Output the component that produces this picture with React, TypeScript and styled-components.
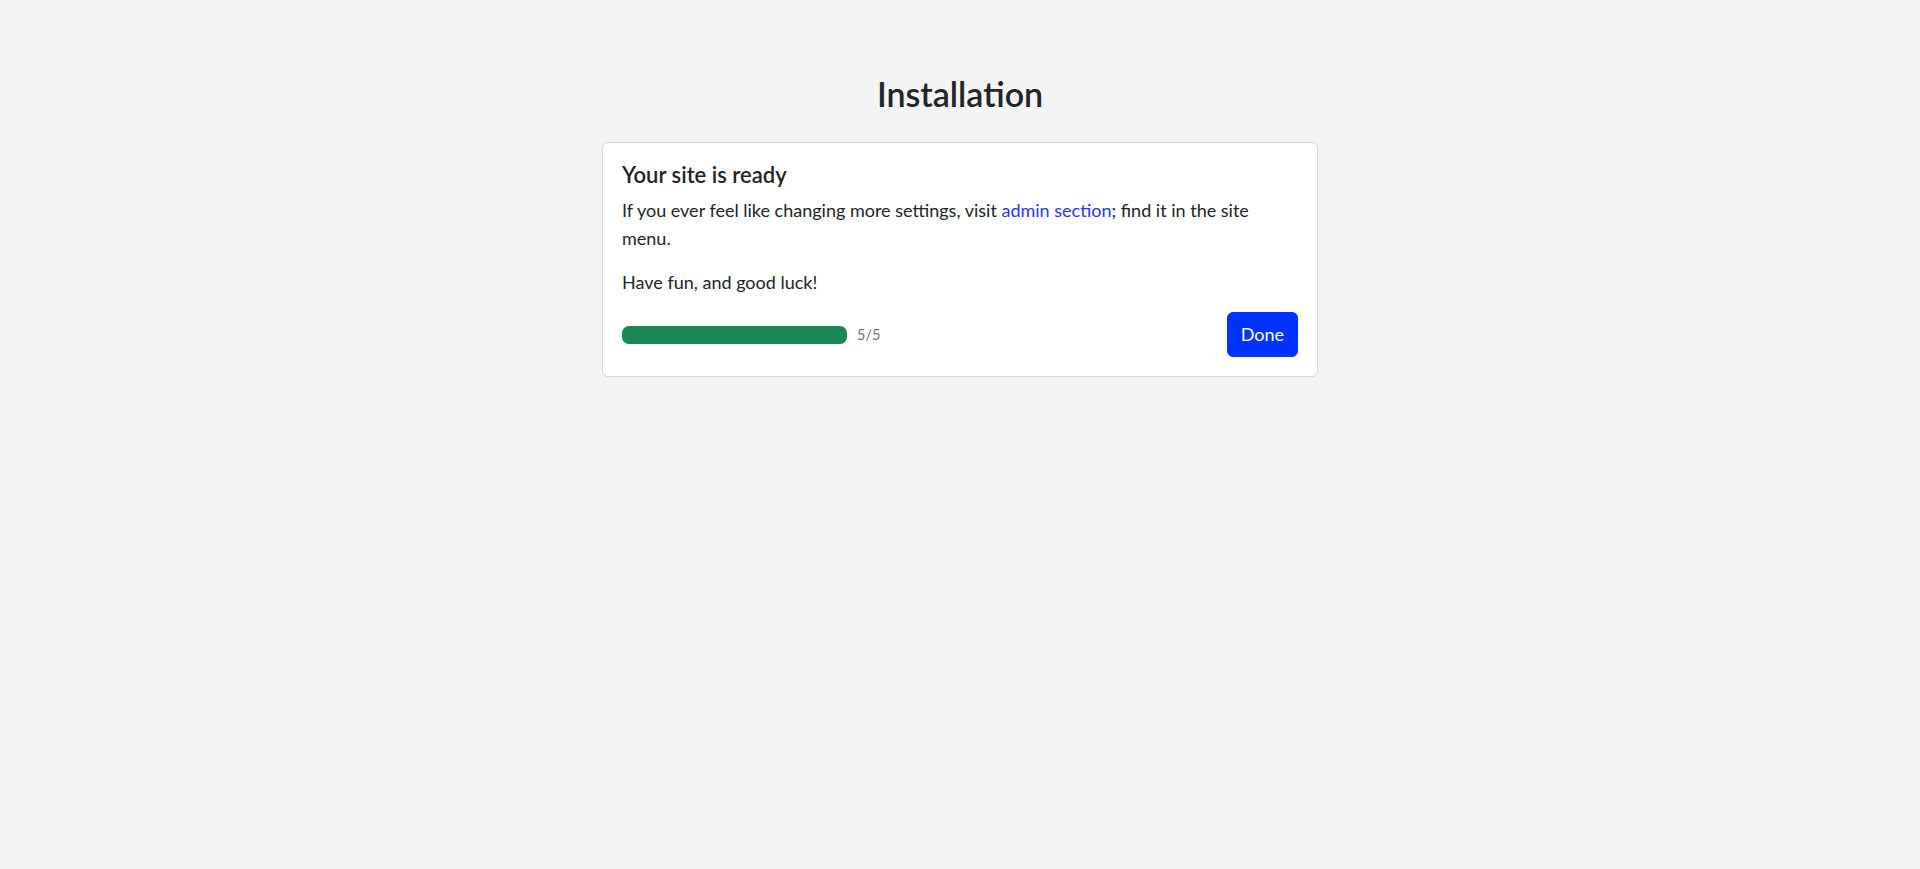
import styled, { createGlobalStyle } from "styled-components";

const GlobalStyle = createGlobalStyle`
  html, body {
    margin: 0;
    padding: 0;
    background-color: #f4f4f4;
    color: #212529;
    font-family: Lato, "Noto Sans", "Liberation Sans", sans-serif;
  }
`;

const Page = styled.main`
  min-height: 869px;
  display: flex;
  flex-direction: column;
  align-items: center;
  padding-top: 74px;
  box-sizing: border-box;
`;

const Heading = styled.h1`
  margin: 0 0 28px;
  font-size: 34px;
  font-weight: 600;
  line-height: 40px;
`;

const Card = styled.section`
  width: 716px;
  box-sizing: border-box;
  background-color: #fff;
  border: 1px solid #d4d4d4;
  border-radius: 6px;
  padding: 19px;
`;

const CardTitle = styled.h2`
  margin: 0 0 9px;
  font-size: 22px;
  font-weight: 600;
  line-height: 25px;
`;

const Text = styled.p`
  margin: 0 0 16px;
  font-size: 18px;
  line-height: 28px;
`;

const Link = styled.a`
  color: #1f35ff;
  text-decoration: none;
`;

const Footer = styled.div`
  display: flex;
  align-items: center;
  justify-content: space-between;
`;

const ProgressWrap = styled.div`
  display: flex;
  align-items: center;
  gap: 10px;
`;

const Track = styled.div`
  width: 225px;
  height: 18px;
  border-radius: 7px;
  background-color: #e9ecef;
  overflow: hidden;
`;

const Bar = styled.div`
  height: 100%;
  background-color: #198754;
`;

const Count = styled.span`
  font-size: 14.5px;
  color: #6c757d;
`;

const Button = styled.button`
  font-family: inherit;
  font-size: 18px;
  line-height: 27px;
  padding: 8px 13px;
  border: 1px solid #0033ff;
  border-radius: 6px;
  background-color: #0033ff;
  color: #fff;
  cursor: pointer;
`;

function App() {
  const done = 5;
  const total = 5;
  return (
    <>
      <GlobalStyle />
      <Page>
        <Heading>Installation</Heading>
        <Card>
          <CardTitle>Your site is ready</CardTitle>
          <Text>
            If you ever feel like changing more settings, visit{" "}
            <Link href="#">admin section</Link>; find it in the site menu.
          </Text>
          <Text>Have fun, and good luck!</Text>
          <Footer>
            <ProgressWrap>
              <Track>
                <Bar style={{ width: `${(done / total) * 100}%` }} />
              </Track>
              <Count>
                {done}/{total}
              </Count>
            </ProgressWrap>
            <Button>Done</Button>
          </Footer>
        </Card>
      </Page>
    </>
  );
}

export default App;
